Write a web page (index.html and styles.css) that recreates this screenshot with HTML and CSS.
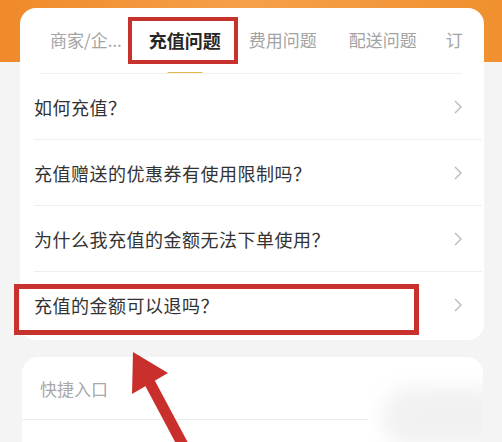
FILE: index.html
```html
<!DOCTYPE html>
<html lang="zh">
<head>
<meta charset="utf-8">
<link rel="stylesheet" href="styles.css">
</head>
<body>
<div class="page">
  <div class="hero"></div>
  <div class="card faq">
    <div class="tabs">
      <span class="tab t1">商家/企...</span>
      <span class="tab active">充值问题</span>
      <span class="tab t3">费用问题</span>
      <span class="tab t4">配送问题</span>
      <span class="tab cut">订</span>
    </div>
    <ul class="list">
      <li class="row"><span>如何充值？</span><svg class="chev" width="8" height="14" viewBox="0 0 8 14"><polyline points="1,1 7,7 1,13" fill="none" stroke="#b9b9b9" stroke-width="1.4"/></svg></li>
      <li class="row"><span>充值赠送的优惠券有使用限制吗？</span><svg class="chev" width="8" height="14" viewBox="0 0 8 14"><polyline points="1,1 7,7 1,13" fill="none" stroke="#b9b9b9" stroke-width="1.4"/></svg></li>
      <li class="row"><span>为什么我充值的金额无法下单使用？</span><svg class="chev" width="8" height="14" viewBox="0 0 8 14"><polyline points="1,1 7,7 1,13" fill="none" stroke="#b9b9b9" stroke-width="1.4"/></svg></li>
      <li class="row"><span>充值的金额可以退吗？</span><svg class="chev" width="8" height="14" viewBox="0 0 8 14"><polyline points="1,1 7,7 1,13" fill="none" stroke="#b9b9b9" stroke-width="1.4"/></svg></li>
    </ul>
  </div>
  <div class="card quick">
    <div class="quick-title">快捷入口</div>
    <div class="quick-line"></div>
    <div class="blur"></div>
  </div>
  <div class="mark mark-tab"></div>
  <div class="mark mark-row"></div>
  <svg class="arrow" width="502" height="442" viewBox="0 0 502 442">
    <line x1="143" y1="370" x2="192" y2="462" stroke="#c9302b" stroke-width="11"/>
    <polygon points="133,352 168,373 132,394" fill="#c9302b"/>
  </svg>
</div>
</body>
</html>
```
FILE: styles.css
```css
* { box-sizing: border-box; }
html, body { margin: 0; padding: 0; }
body {
  width: 502px;
  height: 442px;
  overflow: hidden;
  background: #f4f4f4;
  font-family: "Noto Sans CJK SC", "Noto Sans", sans-serif;
}
.page { position: relative; width: 502px; height: 442px; overflow: hidden; }
.hero {
  height: 62px;
  background: linear-gradient(90deg, #f08a2a 0%, #f5a04a 50%, #f0902e 100%);
}
.card {
  background: #fff;
  border-radius: 16px;
}
.faq {
  margin: -54px 18px 0 20px;
  height: 332px;
}
.tabs {
  height: 66px;
  display: flex;
  align-items: center;
  padding: 0 0 0 30px;
  position: relative;
  white-space: nowrap;
  overflow: hidden;
  border-radius: 16px 16px 0 0;
}
.tabs::after {
  content: "";
  position: absolute;
  left: 20px;
  right: 22px;
  bottom: 0;
  height: 1px;
  background: #f1f1f1;
}
.tab {
  font-size: 17px;
  color: #a3a3a3;
  position: relative;
  line-height: 24px;
  top: -1px;
}
.t1 { margin-right: 27px; }
.t3 { margin-right: 32px; }
.t4 { margin-right: 29px; }
.tab.active {
  color: #262626;
  font-weight: 700;
  font-size: 18px;
  margin-right: 28px;
}
.tab.active::after {
  content: "";
  position: absolute;
  left: 18px;
  width: 36px;
  height: 3px;
  top: 44px;
  border-radius: 2px;
  background: #e2b94a;
}
.list { list-style: none; margin: 0; padding: 0; }
.row {
  height: 66px;
  display: flex;
  align-items: center;
  justify-content: space-between;
  padding: 0 22px 0 14px;
  font-size: 18px;
  letter-spacing: 0.5px;
  color: #333;
  position: relative;
}
.row:not(:last-child)::after {
  content: "";
  position: absolute;
  left: 14px;
  right: 2px;
  bottom: 0;
  height: 1px;
  background: #efefef;
}
.chev { display: block; }
.quick {
  margin: 17px 19px 0 22px;
  height: 120px;
  position: relative;
  overflow: hidden;
  border-radius: 16px 16px 0 0;
}
.quick-title {
  padding: 20px 0 0 18px;
  font-size: 17px;
  color: #a8a8a8;
  line-height: 24px;
}
.quick-line {
  margin-top: 18px;
  width: 346px;
  height: 1px;
  background: #ececec;
}
.blur {
  position: absolute;
  left: 360px;
  top: 30px;
  width: 140px;
  height: 60px;
  border-radius: 30px;
  background: #f1f1f1;
  filter: blur(10px);
}
.mark {
  position: absolute;
  border: 4px solid #c8322c;
}
.mark-tab { left: 128px; top: 17px; width: 110px; height: 47px; }
.mark-row { left: 14px; top: 284px; width: 405px; height: 51px; border-width: 5px; }
.arrow { position: absolute; left: 0; top: 0; pointer-events: none; }
```
